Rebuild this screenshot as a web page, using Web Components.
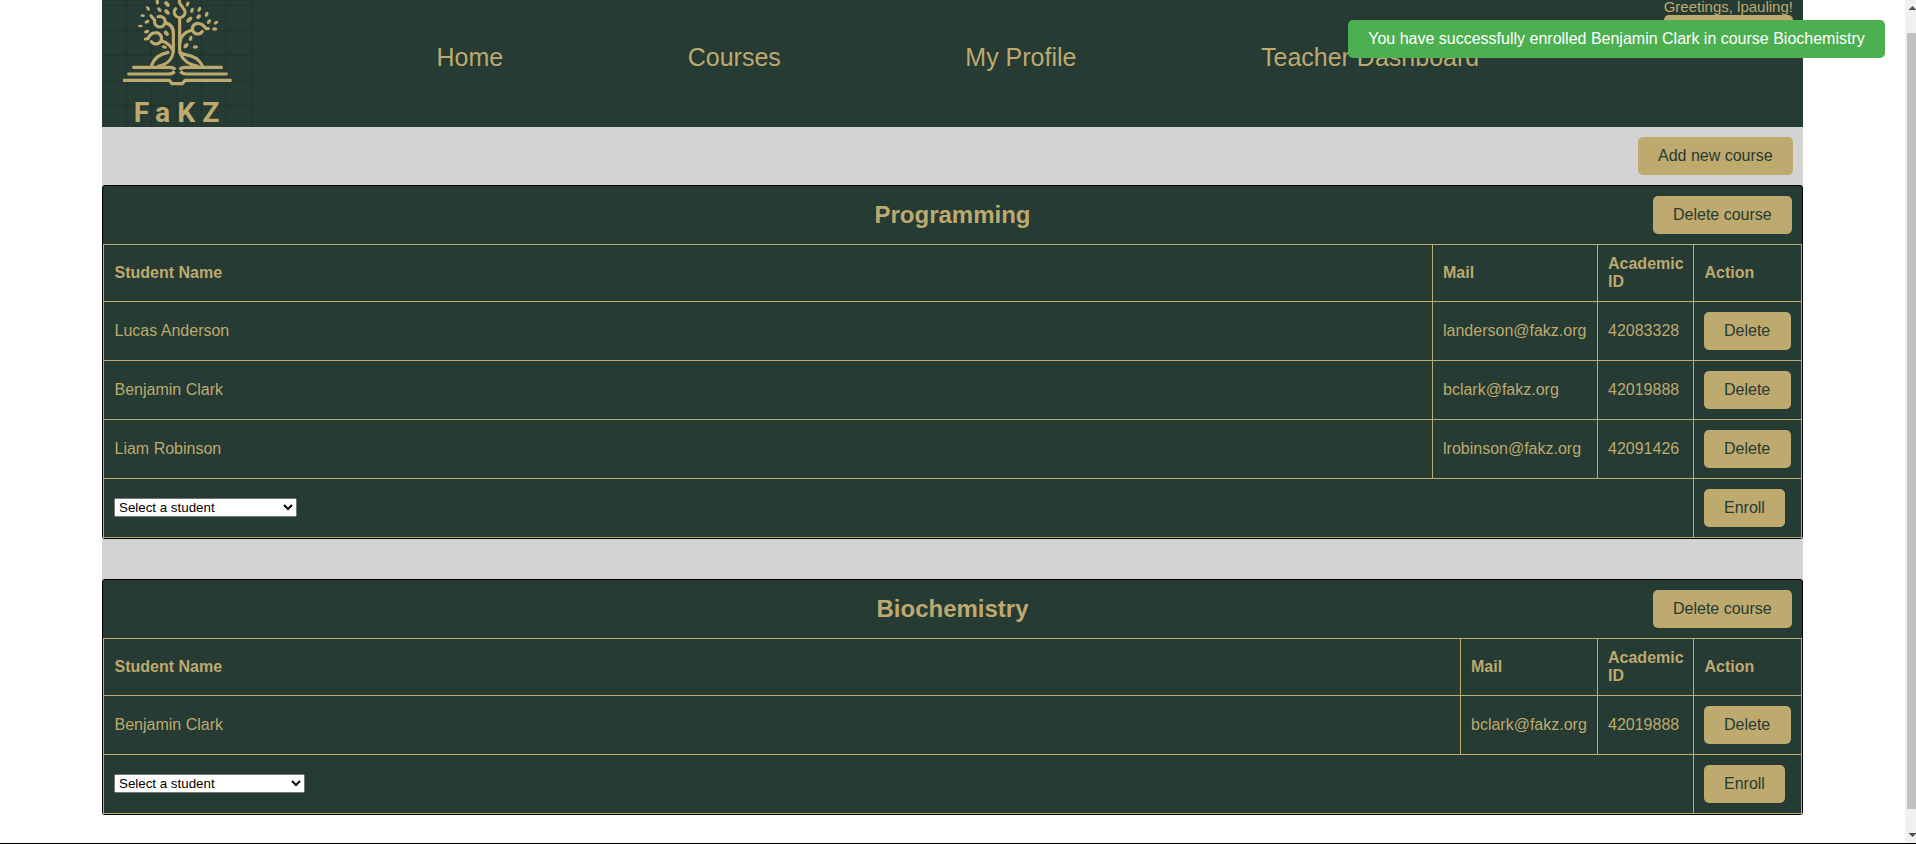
<!DOCTYPE html>
<html lang="en">
<head>
<meta charset="utf-8">
<title>FaKZ - Teacher Dashboard</title>
<style>
  html, body { margin: 0; height: 844px; overflow: hidden; background: #fff; }
  body { font-family: "Liberation Sans", Arial, sans-serif; font-size: 16px; color: #bea96e; }
</style>
</head>
<body>
<app-shell>
  <site-header>
    <nav-link>Home</nav-link>
    <nav-link>Courses</nav-link>
    <nav-link>My Profile</nav-link>
    <nav-link>Teacher Dashboard</nav-link>
    <span slot="greeting">Greetings, lpauling!</span>
  </site-header>
  <tool-bar><gold-button>Add new course</gold-button></tool-bar>
  <course-card heading="Programming" mail-width="165" select-width="183">
    <student-row name="Lucas Anderson" mail="landerson@fakz.org" number="42083328"></student-row>
    <student-row name="Benjamin Clark" mail="bclark@fakz.org" number="42019888"></student-row>
    <student-row name="Liam Robinson" mail="lrobinson@fakz.org" number="42091426"></student-row>
  </course-card>
  <course-card heading="Biochemistry" mail-width="137" select-width="191">
    <student-row name="Benjamin Clark" mail="bclark@fakz.org" number="42019888"></student-row>
  </course-card>
  <toast-message slot="toast">You have successfully enrolled Benjamin Clark in course Biochemistry</toast-message>
</app-shell>
<script>
const define = (tag, html, setup) => customElements.define(tag, class extends HTMLElement {
  constructor() {
    super();
    const t = document.createElement('template');
    t.innerHTML = html;
    this.attachShadow({ mode: 'open' }).append(t.content.cloneNode(true));
  }
  connectedCallback() { if (setup) setup(this, this.shadowRoot); }
});

define('gold-button', `
<style>
  :host { display: inline-block; vertical-align: top; }
  button { display: block; width: 100%; height: 38px; margin: 0; padding: 10px 20px; border: 0; border-radius: 5px;
    background: #bea96e; color: #253b33; font: 16px/18px "Liberation Sans", Arial, sans-serif; white-space: nowrap; text-align: left; }
</style>
<button><slot></slot></button>`);

define('nav-link', `
<style>
  :host { display: block; font-size: 25px; line-height: 29px; white-space: nowrap; }
</style>
<slot></slot>`);

define('brand-logo', `
<style>
  :host { display: block; width: 150px; height: 127px; }
  svg { display: block; overflow: visible; }
</style>
<svg width="150" height="127" viewBox="18 0 450 381">
  <path d="M92 0V381M167 0V381M241 0V381M316 0V381M391 0V381M466 0V381M18 16H468M18 91H468M18 166H468M18 241H468M18 316H468" stroke="#20352d" stroke-width="3"/>
  <g fill="none" stroke="#bea96e" stroke-width="9.5" stroke-linecap="round" stroke-linejoin="round">
    <path d="M251 54V152Q253 162 268 164C296 168 311 180 319 197M251 158C263 184 282 196 304 198M232 156V96Q231 76 211 69M232 152C229 181 213 193 187 199M167 196C174 174 191 162 216 157"/>
    <path d="M148 117L156 116Q163 99 178 98A17 17 0 1 1 166 125M197 122C211 127 225 138 230 150"/>
    <path d="M165 47L176 61A16 16 0 1 0 186 50M209 68C224 73 232 84 232 99"/>
    <path d="M250 0V8L262 25A16 16 0 1 1 239 26"/>
    <path d="M337 86H330Q320 70 305 70A16 16 0 1 0 319 94M288 90C266 96 253 108 251 130"/>
    <path d="M109 202H222Q233 202 238 209M380 202H267Q256 202 251 209M94 222H218Q229 222 236 214M395 222H269Q260 222 253 214M81 241H220L228 251H259L267 241H407" stroke-linecap="butt"/>
  </g>
  <g fill="#bea96e">
    <ellipse cx="156" cy="25" rx="4.5" ry="8" transform="rotate(-35 156 25)"/><ellipse cx="184" cy="6" rx="5" ry="8"/>
    <ellipse cx="190" cy="29" rx="5" ry="8" transform="rotate(-40 190 29)"/><ellipse cx="213" cy="12" rx="6" ry="10" transform="rotate(-40 213 12)"/>
    <ellipse cx="213" cy="36" rx="6" ry="10" transform="rotate(-40 213 36)"/><ellipse cx="140" cy="47" rx="7" ry="4"/>
    <ellipse cx="133" cy="78" rx="7" ry="4"/><ellipse cx="153" cy="65" rx="8" ry="5" transform="rotate(-25 153 65)"/>
    <ellipse cx="152" cy="95" rx="8" ry="5" transform="rotate(-20 152 95)"/><ellipse cx="211" cy="100" rx="6" ry="9" transform="rotate(-40 211 100)"/>
    <ellipse cx="205" cy="141" rx="8" ry="5" transform="rotate(15 205 141)"/><ellipse cx="275" cy="12" rx="5" ry="8" transform="rotate(20 275 12)"/>
    <ellipse cx="288" cy="31" rx="5" ry="8" transform="rotate(20 288 31)"/>
    <ellipse cx="310" cy="28" rx="5" ry="8" transform="rotate(30 310 28)"/><ellipse cx="280" cy="59" rx="6" ry="11" transform="rotate(45 280 59)"/>
    <ellipse cx="308" cy="50" rx="6" ry="8" transform="rotate(45 308 50)"/><ellipse cx="332" cy="43" rx="5" ry="8" transform="rotate(20 332 43)"/>
    <ellipse cx="339" cy="65" rx="5" ry="8" transform="rotate(40 339 65)"/><ellipse cx="360" cy="68" rx="7" ry="5" transform="rotate(-30 360 68)"/>
    <ellipse cx="356" cy="87" rx="8" ry="5"/><ellipse cx="284" cy="115" rx="5" ry="8" transform="rotate(20 284 115)"/>
    <ellipse cx="270" cy="137" rx="6" ry="9" transform="rotate(40 270 137)"/><ellipse cx="298" cy="141" rx="8" ry="5"/>
  </g>
  <g fill="#bea96e" font-family="Roboto, sans-serif" font-weight="700" font-size="85">
    <text x="113" y="367">F</text><text x="177" y="367">a</text><text x="244" y="367">K</text><text x="319" y="367">Z</text>
  </g>
</svg>`);

define('site-header', `
<style>
  :host { display: flex; height: 127px; background: #253b33; padding-right: 10px; justify-content: space-between; box-sizing: border-box; }
  nav { display: contents; }
  ::slotted(nav-link) { margin-top: 43px; }
  .user { width: max-content; font-size: 15px; line-height: 17px; margin-top: -2px; white-space: nowrap; }
  .logout { height: 38px; border-radius: 5px; background: #bea96e; }
</style>
<brand-logo></brand-logo>
<nav><slot></slot></nav>
<div class="user"><slot name="greeting"></slot><div class="logout"></div></div>`);

define('tool-bar', `
<style>
  :host { display: flex; justify-content: flex-end; padding: 10px; height: 38px; }
  ::slotted(gold-button) { width: 155px; }
</style>
<slot></slot>`);

define('student-row', `
<style>
  :host { display: grid; grid-template-columns: 1fr var(--mail) 96px 108px; height: 59px; }
  div { box-sizing: border-box; border: 0 solid #bea96e; border-width: 1px 0 0 1px; padding: 0 10px; display: flex; align-items: center; }
  .name { padding-left: 10.5px; }
  gold-button { width: 87px; }
</style>
<div class="name"></div><div class="mail"></div><div class="id"></div><div><gold-button>Delete</gold-button></div>`,
(el, root) => {
  root.querySelector('.name').textContent = el.getAttribute('name');
  root.querySelector('.mail').textContent = el.getAttribute('mail');
  root.querySelector('.id').textContent = el.getAttribute('number');
});

define('course-card', `
<style>
  :host { display: block; border: 1px solid #000; border-radius: 3px; background: #253b33; }
  header { display: grid; grid-template-columns: 1fr auto 1fr; align-items: center; height: 58px; padding: 0 10px; box-sizing: border-box; }
  h2 { margin: 0; grid-column: 2; font-size: 24px; line-height: 28px; }
  header gold-button { justify-self: end; width: 139px; }
  .table { border: 0 solid #bea96e; border-width: 0 1px 1px 0; }
  .head, .enroll { display: grid; }
  .head { grid-template-columns: 1fr var(--mail) 96px 108px; height: 57px; font-weight: bold; line-height: 18px; }
  .enroll { grid-template-columns: 1fr 108px; height: 59px; }
  .head div, .enroll div { box-sizing: border-box; border: 0 solid #bea96e; border-width: 1px 0 0 1px; padding: 0 10px; display: flex; align-items: center; }
  .head div:first-child, .head div:last-child { padding-left: 10.5px; }
  .enroll div:first-child { padding-bottom: 1px; }
  .enroll gold-button { width: 81px; }
  select { margin: 0; height: 19px; width: var(--select); font: 13.333px "Liberation Sans", Arial, sans-serif; }
</style>
<header><h2></h2><gold-button>Delete course</gold-button></header>
<div class="table">
  <div class="head"><div>Student Name</div><div>Mail</div><div>Academic ID</div><div>Action</div></div>
  <slot></slot>
  <div class="enroll"><div><select><option>Select a student</option></select></div><div><gold-button>Enroll</gold-button></div></div>
</div>`,
(el, root) => {
  root.querySelector('h2').textContent = el.getAttribute('heading');
  el.style.setProperty('--mail', el.getAttribute('mail-width') + 'px');
  el.style.setProperty('--select', el.getAttribute('select-width') + 'px');
});

define('toast-message', `
<style>
  :host { position: absolute; top: 20px; right: 31px; width: 537px; height: 38px; box-sizing: border-box; padding: 10px 0;
    border-radius: 5px; background: #4caf50; color: #fff; line-height: 18px; text-align: center; white-space: nowrap; }
</style>
<slot></slot>`);

define('scroll-bar', `
<style>
  :host { display: flex; flex-direction: column; width: 11px; height: 843px; background: #f1f1f1; }
  .thumb { margin-left: 2px; flex: 1; background: #c1c1c1; }
  svg { display: block; }
  .up { height: 33px; }
  .down { height: 34px; }
</style>
<div class="up"><svg width="11" height="14"><path d="M3.5 10L7.5 6L11.5 10Z" fill="#505050"/></svg></div>
<div class="thumb"></div>
<div class="down"><svg width="11" height="34"><path d="M3.5 24L7.5 28L11.5 24Z" fill="#505050"/></svg></div>`);

define('app-shell', `
<style>
  :host { display: block; height: 844px; box-sizing: border-box; position: relative; border-bottom: 1px solid #000; overflow: hidden; }
  .frame { display: grid; grid-template-columns: 1fr 11px; }
  main { width: 1701px; margin: 0 102px; align-self: start; display: flex; flex-direction: column; background: #d3d3d3; }
  ::slotted(course-card:last-of-type) { margin-top: 40px; }
</style>
<div class="frame"><main><slot></slot></main><scroll-bar></scroll-bar></div>
<slot name="toast"></slot>`);
</script>
</body>
</html>
